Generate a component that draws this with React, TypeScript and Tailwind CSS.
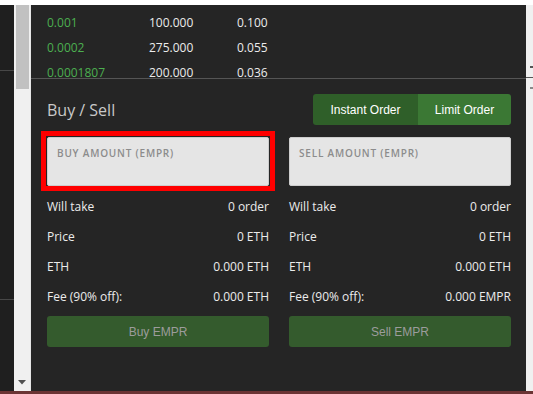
import React from "react";

const orders = [
  { price: "0.001", amount: "100.000", total: "0.100" },
  { price: "0.0002", amount: "275.000", total: "0.055" },
  { price: "0.0001807", amount: "200.000", total: "0.036" },
];

const sides = [
  {
    key: "buy",
    placeholder: "BUY AMOUNT (EMPR)",
    rows: [
      ["Will take", "0 order"],
      ["Price", "0 ETH"],
      ["ETH", "0.000 ETH"],
      ["Fee (90% off):", "0.000 ETH"],
    ],
    button: "Buy EMPR",
    highlighted: true,
  },
  {
    key: "sell",
    placeholder: "SELL AMOUNT (EMPR)",
    rows: [
      ["Will take", "0 order"],
      ["Price", "0 ETH"],
      ["ETH", "0.000 ETH"],
      ["Fee (90% off):", "0.000 EMPR"],
    ],
    button: "Sell EMPR",
    highlighted: false,
  },
];

const sans = "font-['Open_Sans',sans-serif]";
const arial = "font-['Liberation_Sans',Arial,sans-serif]";

export default function App() {
  return (
    <div className="w-[533px] h-[394px] flex flex-col bg-white overflow-hidden">
      <div className="h-[5px] bg-white" />

      <div className="flex flex-1 min-h-0">
        {/* left panel edge */}
        <div className="w-[14px] bg-[#1f1f1f] flex flex-col">
          <div className="h-[66px] border-b border-[#474747]" />
          <div className="h-[229px] border-b border-[#474747]" />
        </div>

        {/* scrollbar */}
        <div className="w-[17px] bg-[#f0f0f0] flex flex-col items-center border-r border-[#e6e6e6]">
          <div className="w-[13px] h-[84px] bg-[#c1c1c1]" />
          <div className="flex-1" />
          <svg width="8" height="5" viewBox="0 0 8 5" className="mb-[6px]">
            <path d="M0 0H8L4 4.5Z" fill="#505050" />
          </svg>
        </div>

        {/* main panel */}
        <div className={`flex-1 bg-[#252525] flex flex-col ${sans}`}>
          <div className="h-[73px] pt-[11px] px-4 flex flex-col gap-[11px]">
            {orders.map((o) => (
              <div key={o.price} className="h-[14px] leading-[14px] flex text-[12px]">
                <span className="w-[102px] text-[#4caf50]">{o.price}</span>
                <span className="w-[88px] text-[#ececec]">{o.amount}</span>
                <span className="text-[#ececec]">{o.total}</span>
              </div>
            ))}
          </div>

          <div className="flex-1 border-t border-[#555] pl-4 pr-[15px] pt-[15px]">
            <div className="h-[31px] flex items-center justify-between">
              <span className="text-[16px] text-[#c9c9c9] leading-none">Buy / Sell</span>
              <div className={`flex h-[31px] rounded-[3px] overflow-hidden text-[12px] text-white ${arial}`}>
                <div className="w-[105px] bg-[#2f5f29] flex items-center justify-center">Instant Order</div>
                <div className="w-[93px] bg-[#3b7834] flex items-center justify-center">Limit Order</div>
              </div>
            </div>

            <div className="mt-[12px] grid grid-cols-2 gap-x-5">
              {sides.map((s) => (
                <div key={s.key} className="flex flex-col">
                  <div className="relative">
                    <div className="h-[49px] bg-[#e5e5e5] border border-[#cdcdcd] rounded-[2px] pl-[9px] pt-[8px] text-[10px] font-semibold tracking-[0.8px] text-[#8c8c8c]">
                      {s.placeholder}
                    </div>
                    {s.highlighted && (
                      <div className="absolute -left-[6px] -right-[6px] -top-[6px] -bottom-[5px] border-[5px] border-[#ff0000]" />
                    )}
                  </div>
                  <div className="mt-[6px]">
                    {s.rows.map(([label, value]) => (
                      <div key={label} className="h-[30px] flex items-center justify-between text-[12px] text-[#ececec]">
                        <span>{label}</span>
                        <span>{value}</span>
                      </div>
                    ))}
                  </div>
                  <div
                    className={`mt-[4px] h-[31px] bg-[#345b2d] rounded-[3px] flex items-center justify-center text-[12px] text-[#9c9c9c] ${arial}`}
                  >
                    {s.button}
                  </div>
                </div>
              ))}
            </div>
          </div>
        </div>

        {/* right strip */}
        <div className="w-[7px] bg-[#f0f0f0] flex flex-col items-end">
          <div className="h-[61px]" />
          <div className="w-[3px] h-[2px] bg-[#555]" />
          <div className="h-[9px]" />
          <div className="w-full h-[1px] bg-[#555]" />
          <div className="h-[9px]" />
          <div className="w-[3px] h-[2px] bg-[#8a8a8a]" />
        </div>
      </div>

      <div className="h-[3px] bg-[#6b3434]" />
    </div>
  );
}
